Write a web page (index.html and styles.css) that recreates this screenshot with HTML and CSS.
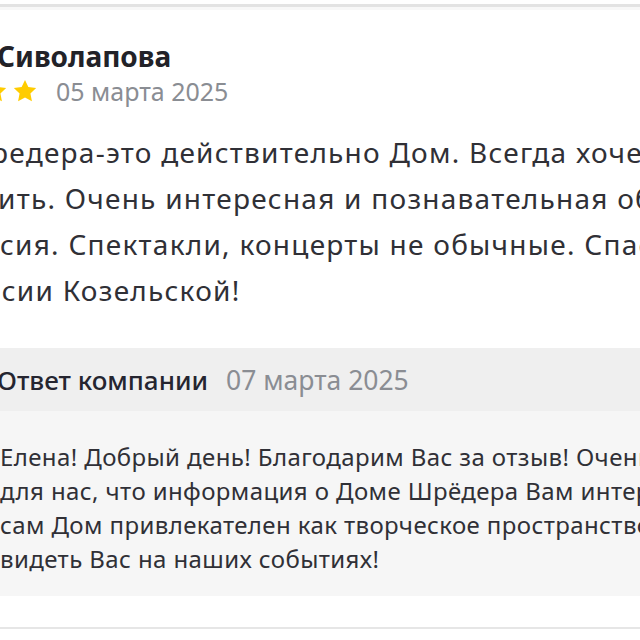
FILE: index.html
```html
<!DOCTYPE html>
<html lang="ru">
<head>
<meta charset="utf-8">
<link rel="stylesheet" href="styles.css">
</head>
<body>
<div class="card">
  <div class="top-rule"></div>
  <div class="review">
    <div class="author">Сиволапова</div>
    <div class="meta">
      <span class="stars">
        <svg class="star" viewBox="0 0 24 24" width="26" height="26"><path d="M12 1.8l3.1 6.6 7.2.9-5.3 5 1.4 7.1L12 17.9l-6.4 3.5L7 14.3l-5.3-5 7.2-.9z" fill="#fc0"/></svg>
        <svg class="star" viewBox="0 0 24 24" width="26" height="26"><path d="M12 1.8l3.1 6.6 7.2.9-5.3 5 1.4 7.1L12 17.9l-6.4 3.5L7 14.3l-5.3-5 7.2-.9z" fill="#fc0"/></svg>
      </span>
      <span class="date">05 марта 2025</span>
    </div>
    <div class="text">
      <div class="ln l1">редера-это действительно Дом. Всегда хочется сюда</div>
      <div class="ln l2">ить. Очень интересная и познавательная обзорная</div>
      <div class="ln l3">сия. Спектакли, концерты не обычные. Спасибо</div>
      <div class="ln l4">асии Козельской!</div>
    </div>
  </div>
  <div class="reply">
    <div class="reply-head">
      <span class="reply-title">Ответ компании</span>
      <span class="reply-date">07 марта 2025</span>
    </div>
    <div class="reply-body">
      <div class="ln">Елена! Добрый день! Благодарим Вас за отзыв! Очень приятно</div>
      <div class="ln">для нас, что информация о Доме Шрёдера Вам интересна, и</div>
      <div class="ln">сам Дом привлекателен как творческое пространство. Рады</div>
      <div class="ln">видеть Вас на наших событиях!</div>
    </div>
  </div>
  <div class="bottom-rule"></div>
</div>
</body>
</html>
```

FILE: styles.css
```css
html, body {
  margin: 0;
  padding: 0;
  background: #fff;
}
body {
  width: 640px;
  height: 640px;
  overflow: hidden;
  font-family: "Noto Sans", "Open Sans", sans-serif;
  color: #333;
}
.card {
  display: flex;
  flex-direction: column;
  width: 640px;
}
.top-rule {
  margin-top: 4px;
  height: 3px;
  background: #e3e3e3;
  border-bottom: 3px solid #f8f8f8;
}
.review {
  display: flex;
  flex-direction: column;
  padding-top: 30px;
}
.author {
  font-size: 28px;
  font-weight: 700;
  line-height: 32px;
  color: #222228;
  margin-left: -3px;
  white-space: nowrap;
}
.meta {
  display: flex;
  align-items: center;
  height: 34px;
  margin-top: 2px;
}
.stars {
  display: flex;
  gap: 4px;
  margin-left: -18px;
}
.star { display: block; }
.date {
  margin-left: 18px;
  font-size: 25px;
  color: #8a8d93;
  white-space: nowrap;
}
.text {
  display: flex;
  flex-direction: column;
  margin-top: 21px;
  font-size: 28px;
  letter-spacing: 1.25px;
  line-height: 46px;
  color: #303036;
}
.ln {
  white-space: nowrap;
}
.l1 { margin-left: -9px; }
.l2 { margin-left: -2px; }
.l3 { margin-left: 0; }
.l4 { margin-left: -15px; }
.reply {
  display: flex;
  flex-direction: column;
  margin-top: 35px;
}
.reply-head {
  display: flex;
  align-items: center;
  gap: 18px;
  height: 63px;
  background: #efefef;
}
.reply-title {
  font-size: 26px;
  font-weight: 500;
  color: #252530;
  margin-left: -3px;
  white-space: nowrap;
}
.reply-date {
  font-size: 26.5px;
  color: #8a8d93;
  white-space: nowrap;
}
.reply-body {
  display: flex;
  flex-direction: column;
  background: #f6f6f6;
  padding: 29px 0 20px 0;
  font-size: 24px;
  letter-spacing: 0.4px;
  line-height: 34px;
  color: #303036;
}
.bottom-rule {
  margin-top: 31px;
  height: 2px;
  background: #e6e6e6;
}
```
